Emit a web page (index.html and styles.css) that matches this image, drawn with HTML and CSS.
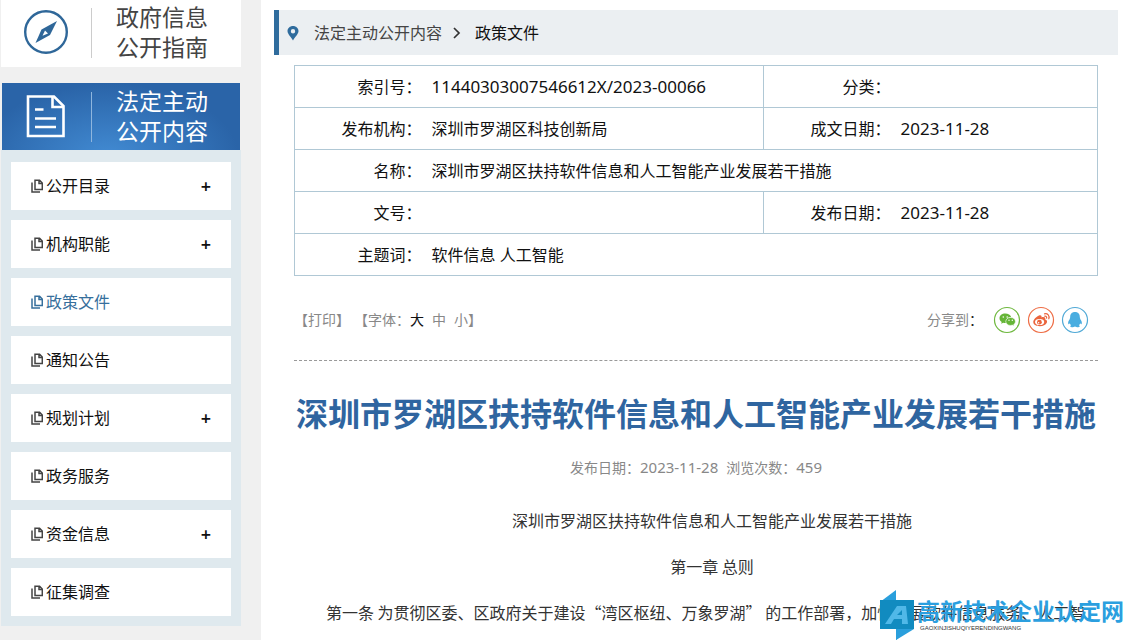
FILE: index.html
```html
<!DOCTYPE html>
<html lang="zh-CN">
<head>
<meta charset="utf-8">
<meta name="viewport" content="width=device-width, initial-scale=1">
<title>深圳市罗湖区扶持软件信息和人工智能产业发展若干措施</title>
<link rel="stylesheet" href="styles.css">
</head>
<body>
<svg class="defs" width="0" height="0" aria-hidden="true">
  <symbol id="copy" viewBox="0 0 12 14">
    <path d="M4 1.2h4.6l2.7 2.900v6.300H4zM8 1.200v3.400h3.300M1 3.600v9.400h8" fill="none" stroke="currentColor" stroke-width="1.500"/>
  </symbol>
</svg>
<div class="page">
  <aside class="sidebar">
    <a class="card card-guide" href="#">
      <svg class="card-icon" viewBox="0 0 46 46" aria-hidden="true">
        <circle cx="23" cy="23" r="20.8" fill="none" stroke="#2f6799" stroke-width="2.4"/>
        <path d="M34 12 27 26 12.500 34 18.500 20.500z" fill="#2f6799"/>
        <path d="M22 21.500l3 3-5.500 2.200z" fill="#fff"/>
      </svg>
      <span class="card-label">政府信息<br>公开指南</span>
    </a>
    <a class="card card-active" href="#">
      <svg class="card-icon" viewBox="0 0 46 46" aria-hidden="true">
        <path d="M5 3.500h26l9.500 9.500v30H5z" fill="none" stroke="#fff" stroke-width="2.600"/>
        <path d="M29.500 3.500V14H40M12 16.500h8.500M12 25.500h21M12 34h21" fill="none" stroke="#fff" stroke-width="2.600"/>
      </svg>
      <span class="card-label">法定主动<br>公开内容</span>
    </a>
    <nav class="menu">
      <div class="item"><a href="#"><svg><use href="#copy"/></svg>公开目录</a><button aria-label="展开公开目录">+</button></div>
      <div class="item"><a href="#"><svg><use href="#copy"/></svg>机构职能</a><button aria-label="展开机构职能">+</button></div>
      <div class="item current"><a href="#"><svg><use href="#copy"/></svg>政策文件</a></div>
      <div class="item"><a href="#"><svg><use href="#copy"/></svg>通知公告</a></div>
      <div class="item"><a href="#"><svg><use href="#copy"/></svg>规划计划</a><button aria-label="展开规划计划">+</button></div>
      <div class="item"><a href="#"><svg><use href="#copy"/></svg>政务服务</a></div>
      <div class="item"><a href="#"><svg><use href="#copy"/></svg>资金信息</a><button aria-label="展开资金信息">+</button></div>
      <div class="item"><a href="#"><svg><use href="#copy"/></svg>征集调查</a></div>
    </nav>
  </aside>
  <main class="main">
    <nav class="crumbs">
      <svg class="pin" viewBox="0 0 12 16" aria-hidden="true"><path fill-rule="evenodd" d="M6 1C3 1 .5 3.200.5 6.100.5 9.200 4.200 12.300 6 15.500 7.800 12.300 11.500 9.200 11.500 6.100 11.500 3.200 9 1 6 1zm0 3a2.200 2.200 0 110 4.400A2.200 2.200 0 016 4z" fill="#2f6c9d"/></svg>
      <a href="#">法定主动公开内容</a>
      <svg class="arrow" viewBox="0 0 8 12" aria-hidden="true"><path d="M1 1 6 6l-5 5" fill="none" stroke="#333" stroke-width="1.700"/></svg>
      <a class="here" href="#">政策文件</a>
    </nav>
    <div class="content">
      <table class="info">
        <colgroup><col class="c-label"><col class="c-wide"><col class="c-label"><col></colgroup>
        <tr><th>索引号：</th><td class="num">11440303007546612X/2023-00066</td><th class="split">分类：</th><td></td></tr>
        <tr><th>发布机构：</th><td>深圳市罗湖区科技创新局</td><th class="split">成文日期：</th><td class="num">2023-11-28</td></tr>
        <tr><th>名称：</th><td colspan="3">深圳市罗湖区扶持软件信息和人工智能产业发展若干措施</td></tr>
        <tr><th>文号：</th><td></td><th class="split">发布日期：</th><td class="num">2023-11-28</td></tr>
        <tr><th>主题词：</th><td colspan="3">软件信息 人工智能</td></tr>
      </table>
      <div class="tools">
        <div class="tool-group">
          <button>【打印】</button>
          <div class="sizes">【字体：<button class="on">大</button><button>中</button><button>小</button>】</div>
        </div>
        <div class="share">
          <span>分享到<b>：</b></span>
          <a href="#" aria-label="微信"><svg viewBox="0 0 28 28"><circle cx="14" cy="14" r="12.500" fill="#fff" stroke="#6fb83f" stroke-width="1.200"/><path d="M12.300 7.500c-3.300 0-5.800 2-5.800 4.700 0 1.600.9 2.900 2.200 3.700l-.6 1.900 2.200-1.100c.8.2 1.700.3 2.600.2-.6-3.600 2.200-5.900 5.200-5.800-.6-2.200-3-3.600-5.800-3.600z" fill="#65b537"/><path d="M17.600 11.500c-2.800 0-4.800 1.800-4.800 3.900 0 2.300 2.100 4 4.800 4 .7 0 1.300-.1 1.800-.3l1.700 1-.4-1.700c1-.7 1.700-1.800 1.700-3 0-2.200-2.200-3.900-4.800-3.900z" fill="#65b537" stroke="#fff" stroke-width=".5"/><g fill="#fff"><circle cx="10.300" cy="11" r=".8"/><circle cx="14.200" cy="11" r=".8"/><circle cx="16" cy="14.300" r=".7"/><circle cx="19.300" cy="14.300" r=".7"/></g></svg></a>
          <a href="#" aria-label="微博"><svg viewBox="0 0 28 28"><circle cx="14" cy="14" r="12.500" fill="#fff" stroke="#ee6d45" stroke-width="1.200"/><path d="M12 9.500c1.600-.8 3 0 2.500 1.900 2.600-.8 4.300.2 3.700 2 1.700.6 2.300 1.700 1.600 3.300-1 2.200-3.800 3.500-7 3.500-3.800 0-6.500-1.700-6.500-4.200 0-2.300 2.900-5.300 5.700-6.500z" fill="#eb653d"/><ellipse cx="12.600" cy="16" rx="4.600" ry="3.100" fill="#fff"/><circle cx="12.400" cy="16.200" r="2.400" fill="#eb653d"/><circle cx="11.600" cy="16.700" r=".8" fill="#fff"/><path d="M17.500 7.800c3.200-.6 5.300 1.900 4.300 5M17.800 10.200c1.300-.2 2.100.6 1.800 1.900" fill="none" stroke="#eb653d" stroke-width="1.200" stroke-linecap="round"/></svg></a>
          <a href="#" aria-label="QQ"><svg viewBox="0 0 28 28"><circle cx="14" cy="14" r="12.500" fill="#fff" stroke="#50a9d6" stroke-width="1.200"/><path d="M14 6c-3.300 0-4.900 2.200-4.800 5.200-.2.700-.5 1.200-.4 1.900-1.500 1.900-2.100 3.700-1.400 5.200.6 0 1-.5 1.400-1 .2.800.6 1.500 1.200 2-1.600.9-.6 2 1.100 1.900 1 0 2.200-.2 2.900-.7.700.5 1.900.7 2.900.7 1.700.1 2.700-1 1.100-1.900.6-.5 1-1.200 1.200-2 .4.500.8 1 1.400 1 .7-1.500.1-3.300-1.400-5.200.1-.7-.2-1.200-.4-1.900.1-3-1.500-5.200-4.800-5.200z" fill="#49ade0"/></svg></a>
        </div>
      </div>
      <article class="article">
        <h1>深圳市罗湖区扶持软件信息和人工智能产业发展若干措施</h1>
        <div class="meta"><span>发布日期：<i>2023-11-28</i></span><span>浏览次数：<i>459</i></span></div>
        <p class="center">深圳市罗湖区扶持软件信息和人工智能产业发展若干措施</p>
        <p class="center">第一章 总则</p>
        <p>第一条 为贯彻区委、区政府关于建设“湾区枢纽、万象罗湖” 的工作部署，加快发展软件信息服务、人工智</p>
      </article>
    </div>
  </main>
  <div class="watermark">
    <svg viewBox="0 0 36 50" aria-hidden="true"><path d="M1 12 17 0v50l18-14V10H1z" fill="#2a9fdc"/><path d="M1 10h34v29H1z" fill="#118bc0"/><path d="M17 39h18L17 50z" fill="#2a9fdc"/><path fill-rule="evenodd" d="M6 34 18 16h9l2 18h-6v-5h-8l-3 5zm12-9h5v-5z" fill="#50b8e8"/></svg>
    <div class="brand"><strong>高新技术企业认定网</strong><small>GAOXINJISHUQIYERENDINGWANG</small></div>
  </div>
</div>
</body>
</html>
```
FILE: styles.css
```css
* { box-sizing: border-box; }
body {
  margin: 0;
  background: #fff;
  color: #111;
  font: 16px/24px "Noto Sans", "Noto Sans CJK SC", sans-serif;
  text-spacing-trim: space-all;
}
a { color: inherit; text-decoration: none; }
button {
  padding: 0;
  border: 0;
  background: none;
  color: inherit;
  font: inherit;
  cursor: pointer;
}
.defs { position: absolute; }
.page {
  position: relative;
  display: flex;
  min-height: 100vh;
  overflow: hidden;
}
.sidebar {
  flex: 0 0 261px;
  padding: 0 20px 0 1px;
  background: #f0f0f0;
}
.card {
  display: flex;
  align-items: center;
  height: 67px;
  padding-left: 22px;
  padding-bottom: 4px;
  font-size: 23px;
  line-height: 30px;
}
.card-icon { width: 46px; height: 46px; }
.card-label {
  position: relative;
  margin-left: 22px;
  padding-left: 25px;
}
.card-label::before {
  content: "";
  position: absolute;
  left: 0;
  top: 6px;
  bottom: 4px;
  width: 1px;
  background: #ccc;
}
.card-guide { background: #fff; color: #444; }
.card-active {
  margin: 16px 1px 0;
  padding-left: 21px;
  padding-bottom: 2px;
  background: radial-gradient(ellipse at 45% 110%, #428bd3, #2a64a8 70%);
  color: #fff;
}
.card-active .card-label::before { background: #8fb6de; }
.menu {
  display: grid;
  gap: 10px;
  padding: 12px 10px 10px;
  background: #dfe9ee;
}
.item {
  display: flex;
  align-items: center;
  justify-content: space-between;
  height: 48px;
  padding: 0 20px;
  background: #fff;
}
.item a { display: flex; align-items: center; gap: 3px; }
.item svg { width: 12px; height: 14px; color: #444; }
.item button { font-size: 18px; font-weight: 600; }
.item.current, .item.current svg { color: #366f9c; }
.main { flex: 1; min-width: 0; padding: 10px 9px 0 13px; }
.crumbs {
  display: flex;
  align-items: center;
  height: 45px;
  padding-left: 8px;
  border-left: 5px solid #2f6c9d;
  background: #ebeff2;
  color: #444;
}
.pin { width: 12px; height: 16px; margin-right: 15px; }
.arrow { width: 8px; height: 12px; margin: 0 14px 0 11px; }
.here { color: #111; }
.content { padding: 10px 20px 0; }
.info {
  width: 100%;
  table-layout: fixed;
  border-collapse: collapse;
  border: 1px solid #b0c8d5;
}
.c-label { width: 127px; }
.c-wide { width: 42.6%; }
.info tr { height: 42px; border-bottom: 1px solid #b0c8d5; }
.info th { padding: 0; font-weight: 400; text-align: right; }
.info td { padding: 0 0 0 10px; }
.info .num { font-size: 17px; }
.info .split { border-left: 1px solid #b0c8d5; }
.tools {
  display: flex;
  align-items: center;
  justify-content: space-between;
  height: 85px;
  padding: 3px 9px 0 0;
  border-bottom: 1px dashed #999;
  color: #888;
  font-size: 14px;
}
.tool-group, .sizes { display: flex; }
.tool-group { gap: 4px; }
.sizes button + button { margin-left: 8px; }
.sizes .on { color: #111; }
.share { display: flex; align-items: center; gap: 6px; }
.share span { margin-right: 4px; }
.share b { color: #222; font-weight: 400; }
.share svg { display: block; width: 28px; height: 28px; }
.article { color: #333; }
.article h1 {
  margin: 29px 0 0;
  color: #2f65a0;
  font-size: 32px;
  line-height: 48px;
  text-align: center;
  white-space: nowrap;
}
.meta {
  display: flex;
  justify-content: center;
  gap: 8px;
  margin: 17px 0;
  color: #888;
  font-size: 14px;
}
.meta i { font-size: 15px; font-style: normal; }
.article p {
  margin: 0;
  font-family: "Noto Sans CJK SC", sans-serif;
  line-height: 46px;
  text-indent: 32px;
}
.article .center { text-align: center; }
.watermark {
  position: absolute;
  right: 3px;
  bottom: 0;
  display: flex;
  align-items: center;
  gap: 2px;
}
.watermark svg { width: 36px; height: 50px; }
.brand { display: flex; flex-direction: column; padding-top: 2px; }
.brand strong { color: #2b9fdf; font-size: 23px; line-height: 24px; }
.brand small { padding-left: 3px; color: #333; font: 6px/10px "Liberation Sans", sans-serif; }
```
